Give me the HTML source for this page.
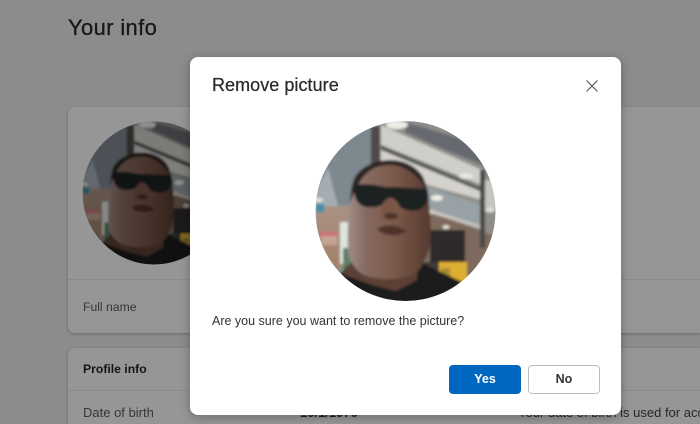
<!DOCTYPE html>
<html>
<head>
<meta charset="utf-8">
<style>
html,body{margin:0;padding:0;width:700px;height:424px;overflow:hidden;background:#e9e9e9;font-family:"Liberation Sans",sans-serif}
#wrap{position:relative;width:700px;height:424px;overflow:hidden;background:#e9e9e9}
.abs{position:absolute;white-space:nowrap}
.soft{filter:blur(.3px)}
.card{position:absolute;left:68px;width:632px;background:#fbfbfb;border-radius:7px 0 0 7px;box-shadow:0 1px 3px rgba(0,0,0,.25)}
.line{position:absolute;left:68px;width:632px;height:1px;background:#e6e6e6}
.overlay{position:absolute;left:0;top:0;width:700px;height:424px;background:rgba(0,0,0,.4)}
.dialog{position:absolute;left:190px;top:57px;width:431px;height:358px;background:#fff;border-radius:8px;box-shadow:0 2px 10px rgba(0,0,0,.3)}
.btn{position:absolute;top:308px;width:72px;height:29px;box-sizing:border-box;border-radius:4px;font-size:12.500px;font-weight:bold;text-align:center;line-height:29px}
svg{position:absolute;left:0;top:0}
</style>
</head>
<body>
<div id="wrap">
<div class="abs soft" style="left:68px;top:15px;font-size:22px;letter-spacing:.35px;color:#2a2a2a;-webkit-text-stroke:.3px #2a2a2a">Your info</div>
<div class="card" style="top:107px;height:226px"></div>
<div class="line" style="top:279px"></div>
<div class="card" style="top:348px;height:76px;border-radius:7px 0 0 0"></div>
<div class="line" style="top:390px"></div>
<div class="abs soft" style="left:83px;top:300px;font-size:12.200px;color:#5c5c5c">Full name</div>
<div class="abs soft" style="left:83px;top:362px;font-size:12.200px;font-weight:bold;color:#222">Profile info</div>
<div class="abs soft" style="left:83px;top:405px;font-size:13px;color:#5c5c5c">Date of birth</div>
<div class="abs soft" style="left:300px;top:405px;font-size:13px;font-weight:bold;color:#333">10/1/1970</div>
<div class="abs soft" style="left:518px;top:405px;width:182px;height:19px;overflow:hidden;font-size:13px;color:#444">Your date of birth is used for account</div>

<svg width="700" height="424" viewBox="0 0 700 424">
<defs>
<clipPath id="c"><circle cx="405.500" cy="211" r="90"/></clipPath>
<filter id="b" x="-5%" y="-5%" width="110%" height="110%"><feGaussianBlur stdDeviation="1.200"/></filter>
<linearGradient id="skin" x1="0" y1="0" x2="1" y2="0"><stop offset="0" stop-color="#a08e88"/><stop offset=".22" stop-color="#866a60"/><stop offset=".55" stop-color="#7c5a4b"/><stop offset="1" stop-color="#553a30"/></linearGradient>
<linearGradient id="wall" x1="0" y1="0" x2="0" y2="1"><stop offset="0" stop-color="#a89184"/><stop offset="1" stop-color="#a4806a"/></linearGradient>
<g id="photo">
<g clip-path="url(#c)"><g filter="url(#b)">
<rect x="315" y="120" width="182" height="182" fill="#8b8f90"/>
<polygon points="316,120 372,120 375,205 316,205" fill="#7d888f"/>
<polygon points="328,168 338,206 316,206 316,192" fill="#a4adb2"/>
<rect x="316" y="206" width="60" height="62" fill="url(#wall)"/>
<polygon points="381,120 500,120 500,302 381,302" fill="#8f8d8a"/>
<polygon points="381,125 482,170 482,185 381,145" fill="#cfcec9"/>
<polygon points="405,122 500,150 500,172 440,148 405,132" fill="#666b70"/>
<polygon points="381,145 482,188 482,192 381,150" fill="#5a5a5a"/>
<polygon points="381,150 482,192 482,200 381,172" fill="#d4d2cd"/>
<polygon points="425,186 482,205 482,226 425,210" fill="#98a2a6"/>
<polygon points="426,210 500,238 500,300 426,300" fill="#7d6a5c"/>
<polygon points="426,208 482,226 482,229 426,212" fill="#c9c5be"/>
<rect x="371" y="126" width="9" height="44" fill="#4f4a48"/>
<rect x="480" y="170" width="5" height="78" fill="#4a4644"/>
<rect x="485" y="180" width="12" height="28" fill="#c6c5c0"/>
<rect x="430" y="230" width="35" height="32" fill="#2d2b2b"/>
<rect x="418" y="262" width="21" height="28" fill="#3c3b38"/>
<rect x="439" y="262" width="28" height="19" fill="#dcae30"/>
<rect x="441" y="268" width="9" height="8" fill="#a88c32"/>
<rect x="340" y="222" width="8" height="42" fill="#dfe4df"/>
<rect x="343" y="248" width="9" height="22" fill="#5c7f66"/>
<rect x="319" y="232" width="19" height="4" fill="#cf6f78"/>
<rect x="321" y="236" width="16" height="9" fill="#c4a593"/>
<rect x="316" y="204" width="8" height="8" fill="#3f8fa8"/>
<ellipse cx="397" cy="125" rx="11" ry="4" fill="#ededE6"/>
<ellipse cx="466" cy="176" rx="7" ry="3" fill="#e8e7de"/>
<ellipse cx="437" cy="198" rx="6" ry="3" fill="#ecebe2"/>
<ellipse cx="319" cy="200" rx="4" ry="2" fill="#e8e8e2"/>
<ellipse cx="490" cy="210" rx="5" ry="2.500" fill="#dddcd5"/>
<ellipse cx="446" cy="227" rx="3.500" ry="2" fill="#e2dfd5"/>
<ellipse cx="430" cy="212" rx="3.500" ry="2" fill="#d8d4c8"/>
<polygon points="340,274 352,262 420,262 462,282 440,305 345,305" fill="#1d1a1a"/>
<path d="M342,274 L352,262 L418,262 L417,280 L396,291 L372,285Z" fill="#5c3f35"/>
<path d="M350,203 C351,190 352,183 355,177 C362,166 376,160 390,160 C406,160 418,168 423,177 C427,186 429,195 429,203 C431,222 431,235 430,243 C428,256 423,266 417,272 C405,280 378,282 362,274 C352,266 348,258 348,250 C347,235 348,218 350,203Z" fill="url(#skin)"/>
<path d="M350,203 C351,190 352,183 355,177 C362,166 376,160 390,160 C406,160 418,168 423,177 C427,186 429,195 429,203 L425,188 C420,178 406,165 390,165 C376,165 366,171 360,182 L354,192Z" fill="#2f2725"/>
<path d="M354,186 C358,183 372,184 386,187 L394,187 L427,189 C429,199 426,209 418,210 C408,212 398,209 392,198 L389,198 C385,206 376,208 366,207 C358,205 353,198 354,186Z" fill="#1e2224"/>
<path d="M380,212 C382,202 386,198 391,198 C396,198 399,204 403,213 C403,218 396,219 392,218 C386,219 380,218 380,212Z" fill="#7a5647"/>
<ellipse cx="391" cy="216" rx="7" ry="3.500" fill="#4f352c"/>
<path d="M377,229 C384,224 396,224 407,231 C398,237 384,237 377,229Z" fill="#4f332b"/>
</g></g>
</g>
</defs>
<use href="#photo" transform="translate(154,193) scale(.794) translate(-405.500,-211)"/>
</svg>

<div class="overlay"></div>

<div class="dialog">
<div class="abs soft" style="left:22px;top:18px;font-size:18px;letter-spacing:.05px;color:#2a2a2a;-webkit-text-stroke:.25px #2a2a2a">Remove picture</div>
<svg style="left:396px;top:23px" width="12" height="12" viewBox="0 0 12 12"><path d="M.5 .5L11.500 11.500M11.500 .5L.5 11.500" stroke="#555" stroke-width="1.100" fill="none"/></svg>
<div class="abs soft" style="left:22px;top:257px;font-size:12.500px;color:#333">Are you sure you want to remove the picture?</div>
<div class="btn" style="left:259px;background:#0067c0;color:#fff">Yes</div>
<div class="btn" style="left:338px;background:#fff;border:1px solid #bdbdbd;line-height:27px;color:#333">No</div>
</div>

<svg width="700" height="424" viewBox="0 0 700 424"><use href="#photo"/></svg>
</div>
</body>
</html>
